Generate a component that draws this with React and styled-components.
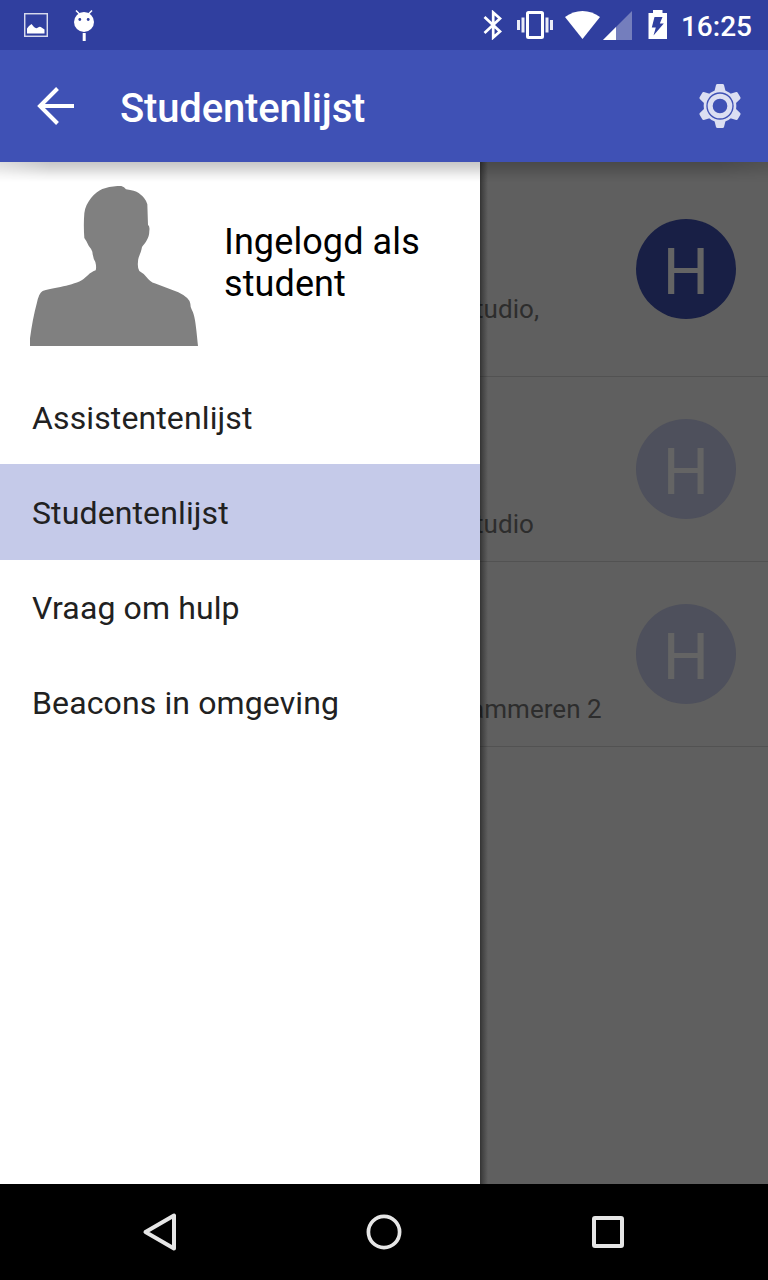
import React from 'react';
import styled, { createGlobalStyle } from 'styled-components';

const GlobalStyle = createGlobalStyle`
  *, *::before, *::after { box-sizing: border-box; }
  body { margin: 0; background: #000; font-family: Roboto, "Noto Sans", sans-serif; }
  svg { display: block; flex: none; }
`;

const Screen = styled.div`
  width: 768px;
  height: 1280px;
  display: flex;
  flex-direction: column;
  overflow: hidden;
`;

const StatusBar = styled.header`
  height: 50px;
  flex: none;
  display: flex;
  align-items: flex-start;
  justify-content: space-between;
  padding: 0 16px 0 24px;
  background: #303f9f;
  color: #fff;
`;

const StatusGroup = styled.div`
  display: flex;
  align-items: flex-start;
`;

const StatusIcon = styled.svg`
  margin-top: ${(p) => p.$top}px;
  margin-right: ${(p) => p.$gap || 0}px;
`;

const Clock = styled.time`
  font-size: 28px;
  font-weight: 500;
  line-height: 33px;
  margin-top: 10px;
`;

const AppBar = styled.nav`
  height: 112px;
  flex: none;
  position: relative;
  z-index: 3;
  display: flex;
  align-items: center;
  padding: 0 27px 0 37px;
  background: #3f51b5;
  color: #fff;

  &::after {
    content: '';
    position: absolute;
    left: 0;
    right: 0;
    top: 100%;
    height: 20px;
    background: linear-gradient(rgba(0, 0, 0, 0.22), rgba(0, 0, 0, 0.16) 30%, rgba(0, 0, 0, 0.05) 70%, rgba(0, 0, 0, 0));
    mask-image: linear-gradient(90deg, rgba(0, 0, 0, 0.6), #000 50px, #000 718px, rgba(0, 0, 0, 0.6));
    pointer-events: none;
  }
`;

const Title = styled.h1`
  flex: 1;
  margin: 6px 0 0 46px;
  font-size: 40px;
  font-weight: 500;
  line-height: 48px;
  letter-spacing: -0.15px;
`;

const Body = styled.main`
  flex: 1;
  min-height: 0;
  position: relative;
  background: #5f5f5f;
`;

const Drawer = styled.aside`
  position: absolute;
  z-index: 2;
  inset: 0 auto 0 0;
  width: 480px;
  background: #fff;
  color: #212121;

  &::after {
    content: '';
    position: absolute;
    left: 100%;
    top: 0;
    bottom: 0;
    width: 8px;
    background: linear-gradient(90deg, rgba(0, 0, 0, 0.45), rgba(0, 0, 0, 0.28) 35%, rgba(0, 0, 0, 0));
  }
`;

const Profile = styled.div`
  height: 207px;
  display: flex;
  align-items: flex-start;
  padding: 24px 30px 0;
`;

const ProfileName = styled.p`
  margin: 35px 0 0 26px;
  width: 220px;
  font-size: 36px;
  line-height: 42px;
  letter-spacing: 0.1px;
  color: #000;
`;

const Menu = styled.ul`
  list-style: none;
  margin: 0;
  padding: 0;
`;

const MenuItem = styled.li`
  height: 96px;
  margin-bottom: -1px;
  padding: 0 32px;
  font-size: 32px;
  line-height: 99px;
  letter-spacing: 0.12px;
  background: ${(p) => (p.$active ? '#c5cae9' : 'transparent')};
`;

const Row = styled.article`
  height: ${(p) => p.$height}px;
  display: flex;
  align-items: center;
  padding-right: 32px;
  border-bottom: 1px solid #525252;
`;

const RowText = styled.p`
  flex: 1;
  align-self: flex-end;
  margin: 0 0 ${(p) => p.$bottom}px;
  padding-left: ${(p) => p.$indent}px;
  font-size: 26px;
  line-height: 30px;
  letter-spacing: 0.05px;
  white-space: nowrap;
  color: #2d2d2d;
`;

const Badge = styled.span`
  width: 100px;
  height: 100px;
  flex: none;
  border-radius: 50%;
  text-align: center;
  font-size: 65px;
  line-height: 107px;
  color: #646464;
  background: ${(p) => (p.$strong ? '#181f45' : '#4e505c')};
`;

const NavBar = styled.footer`
  height: 96px;
  flex: none;
  display: flex;
  align-items: center;
  justify-content: center;
  gap: 184px;
  background: #000;
`;

const rows = [
  { height: 215, text: 'tudio,', indent: 475, bottom: 52, strong: true },
  { height: 185, text: 'tudio', indent: 475, bottom: 22 },
  { height: 185, text: 'ammeren 2', indent: 470, bottom: 22 },
];

const menu = ['Assistentenlijst', 'Studentenlijst', 'Vraag om hulp', 'Beacons in omgeving'];

const GEAR_TOOTH = 'M-17 -43 L-12 -63 Q-11 -66 -8 -66 L8 -66 Q11 -66 12 -63 L17 -43 Z';

function Gear() {
  return (
    <svg width="42" height="44" viewBox="-63 -66 126 132" fill="#dcdff2">
      {[0, 60, 120, 180, 240, 300].map((a) => (
        <path key={a} d={GEAR_TOOTH} transform={`rotate(${a})`} />
      ))}
      <circle r="49" />
      <circle r="41" fill="#3f51b5" />
      <circle r="29.5" fill="none" stroke="#dcdff2" strokeWidth="15" />
    </svg>
  );
}

function Avatar() {
  return (
    <svg width="168" height="160" viewBox="30 33 504 480" fill="#808080">
      <path d="M30 513V490Q38 430 50 386Q57 353 68 348C90 340 150 335 185 316C202 305 206 294 227 286Q230 276 226 261Q219 250 217 230Q213 220 206 212Q200 198 193 189Q190 150 193 115C197 80 225 52 247 42Q270 32 304 33Q313 36 318 43Q345 47 356 54Q378 70 382 88L384 149Q390 155 388 167C388 190 376 202 366 216C363 235 354 246 354 260Q352 280 358 288Q374 297 380 307Q390 321 404 325L475 352Q508 368 511 386Q511 398 516 406C525 423 528 450 534 513Z" />
    </svg>
  );
}

export default function App() {
  return (
    <Screen>
      <GlobalStyle />
      <StatusBar>
        <StatusGroup>
          <StatusIcon $top={13} $gap={26} width="24" height="24" viewBox="0 0 24 24">
            <rect x="0.7" y="0.7" width="22.6" height="22.6" fill="none" stroke="#d6d9ec" strokeWidth="1.5" />
            <path d="M3 20.5V15.5L5 13L7.5 11L10 14Q12 16 14 14.500Q16 13 17.500 14.500L20.500 16.500V20.500Z" fill="#fff" />
          </StatusIcon>
          <StatusIcon $top={9} width="20" height="33" viewBox="0 0 20 33">
            <path d="M2 1.5L6 5.5M18 1.5L14 5.5" stroke="#fff" strokeWidth="1.5" />
            <circle cx="10" cy="13" r="10" fill="#fff" />
            <circle cx="5.8" cy="10.5" r="1.4" fill="#303f9f" />
            <circle cx="14.2" cy="10.5" r="1.4" fill="#303f9f" />
            <rect x="8.7" y="24" width="3" height="8" fill="#fff" />
          </StatusIcon>
        </StatusGroup>
        <StatusGroup>
          <StatusIcon $top={10} $gap={14} width="20" height="30" viewBox="0 0 20 30" fill="none" stroke="#fff" strokeWidth="2.7">
            <path d="M1.5 7L17 21.5L10.2 27.5V2.5L17 8.5L1.5 23" />
          </StatusIcon>
          <StatusIcon $top={11} $gap={12} width="36" height="28" viewBox="0 0 36 28" fill="#fff">
            <rect x="10.5" y="1.5" width="15" height="25" rx="1" fill="none" stroke="#fff" strokeWidth="3" />
            <path d="M0 9h3v10h-3zM4.500 6.500h3v15h-3zM28.500 6.500h3v15h-3zM33 9h3v10h-3z" opacity="0.9" />
          </StatusIcon>
          <StatusIcon $top={11} $gap={3} width="35" height="28" viewBox="0 0 35 28" fill="#fff">
            <path d="M17.500 28L0 6Q8 0 17.500 0T35 6Z" />
          </StatusIcon>
          <StatusIcon $top={11} $gap={16} width="29" height="29" viewBox="0 0 29 29">
            <path d="M0 29L29 0V29Z" fill="#747ebd" />
            <path d="M0 29L13 16V29Z" fill="#fff" />
          </StatusIcon>
          <StatusIcon $top={10} $gap={13} width="20" height="29" viewBox="0 0 20 29">
            <path d="M0.500 3H5V0H14.500V3H19V29H0.500Z" fill="#fff" />
            <path d="M6.500 7H14.500L11.800 13.500H15.800L5.500 25.500L7.800 17.500H3.800Z" fill="#303f9f" />
          </StatusIcon>
          <Clock>16:25</Clock>
        </StatusGroup>
      </StatusBar>

      <AppBar>
        <svg width="37" height="38" viewBox="0 0 37 38" fill="none" stroke="#fff" strokeWidth="4">
          <path d="M37 19H3M20.500 1.500L3 19L20.500 36.500" />
        </svg>
        <Title>Studentenlijst</Title>
        <Gear />
      </AppBar>

      <Body>
        {rows.map((r, i) => (
          <Row key={i} $height={r.height}>
            <RowText $indent={r.indent} $bottom={r.bottom}>{r.text}</RowText>
            <Badge $strong={r.strong}>H</Badge>
          </Row>
        ))}
        <Drawer>
          <Profile>
            <Avatar />
            <ProfileName>Ingelogd als student</ProfileName>
          </Profile>
          <Menu>
            {menu.map((label) => (
              <MenuItem key={label} $active={label === 'Studentenlijst'}>{label}</MenuItem>
            ))}
          </Menu>
        </Drawer>
      </Body>

      <NavBar>
        <svg width="40" height="40" viewBox="0 0 40 40" fill="none" stroke="#e6e6e6" strokeWidth="4" strokeLinejoin="round">
          <path d="M34 3.500V36.500L5.500 20Z" />
        </svg>
        <svg width="40" height="40" viewBox="0 0 40 40" fill="none" stroke="#e6e6e6" strokeWidth="3.700">
          <circle cx="20" cy="20" r="15.600" />
        </svg>
        <svg width="40" height="40" viewBox="0 0 40 40" fill="none" stroke="#e6e6e6" strokeWidth="4">
          <rect x="6" y="6" width="28" height="28" rx="1" />
        </svg>
      </NavBar>
    </Screen>
  );
}
